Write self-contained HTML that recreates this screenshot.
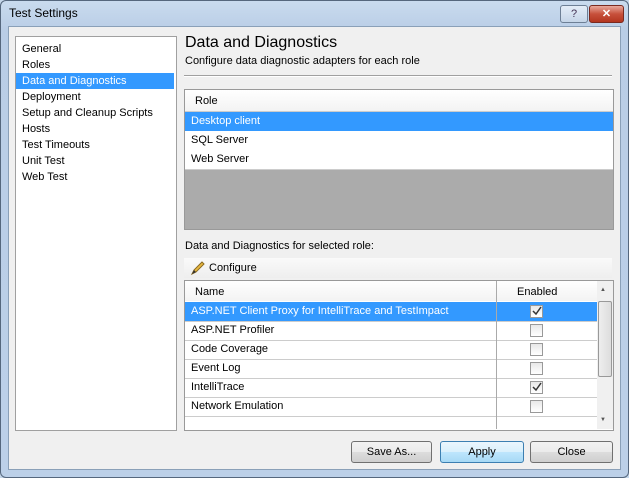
<html><head><style>
body{margin:0;width:629px;height:478px;overflow:hidden;font-family:"Liberation Sans",sans-serif;font-size:11px;color:#000;background:#c5d7ea}
.a{position:absolute}
.win{left:0;top:0;width:627px;height:476px;border:1px solid #55677d;border-radius:6px;background:linear-gradient(#c9dbee,#b9cde6 30px,#bcd0e8);}
.body{left:8px;top:26px;width:611px;height:442px;background:#f0f0f0;border:1px solid #8aa0b8}
.row{position:absolute;left:0;right:0;height:19px;border-bottom:1px solid #ccc;line-height:18px;padding-left:6px}
.sel{background:#3399ff;color:#fff}
.cb{position:absolute;left:345px;top:3px;width:11px;height:11px;border:1px solid #999;background:linear-gradient(#e8e8e8,#fff)}
.btn{position:absolute;top:441px;height:20px;border:1px solid #707070;border-radius:3px;background:linear-gradient(#f2f2f2,#ebebeb 50%,#dddddd 50%,#cfcfcf);text-align:center;line-height:20px}
</style></head><body>
<div class="a win"></div>
<div class="a" style="left:9px;top:6px;font-size:12px">Test Settings</div>
<div class="a" style="left:560px;top:5px;width:26px;height:16px;border:1px solid #6d7f95;border-radius:3px;background:linear-gradient(#e4edf7,#c5d5e8);text-align:center;font-size:11px;color:#435;line-height:16px">?</div>
<div class="a" style="left:589px;top:5px;width:33px;height:16px;border:1px solid #7a2a20;border-radius:3px;background:linear-gradient(#e9a99c,#c7503b 50%,#b33620);text-align:center;color:#fff;font-weight:bold;font-size:11px;line-height:16px">✕</div>
<div class="a body"></div>
<div class="a" style="left:15px;top:36px;width:160px;height:393px;background:#fff;border:1px solid #a0a0a0"></div>
<div class="a" style="left:16px;top:41px;width:158px;line-height:16px">
<div style="padding-left:6px">General</div><div style="padding-left:6px">Roles</div>
<div class="sel" style="padding-left:6px">Data and Diagnostics</div>
<div style="padding-left:6px">Deployment</div><div style="padding-left:6px">Setup and Cleanup Scripts</div>
<div style="padding-left:6px">Hosts</div><div style="padding-left:6px">Test Timeouts</div><div style="padding-left:6px">Unit Test</div><div style="padding-left:6px">Web Test</div></div>
<div class="a" style="left:185px;top:34px;font-size:16px">Data and Diagnostics</div>
<div class="a" style="left:185px;top:55px">Configure data diagnostic adapters for each role</div>
<div class="a" style="left:184px;top:75px;width:428px;height:1px;background:#a0a0a0;border-bottom:1px solid #fff"></div>
<div class="a" style="left:184px;top:89px;width:428px;height:139px;background:#ababab;border:1px solid #999">
<div class="row" style="top:0;height:21px;background:linear-gradient(#fff,#f3f3f3);line-height:22px;padding-left:10px">Role</div>
<div class="row sel" style="top:22px">Desktop client</div>
<div class="row" style="top:41px;background:#fff">SQL Server</div>
<div class="row" style="top:60px;background:#fff">Web Server</div>
</div>
<div class="a" style="left:185px;top:240px">Data and Diagnostics for selected role:</div>
<div class="a" style="left:184px;top:258px;width:428px;height:20px;background:linear-gradient(#fafafa,#eee)"></div>
<svg class="a" style="left:190px;top:260px" width="16" height="16"><path d="M2 14 L4 10 L12 2 L14 4 L6 12 Z" fill="#e8b840" stroke="#8a6a20" stroke-width="1"/><path d="M2 14 L4 10 L6 12Z" fill="#333"/></svg>
<div class="a" style="left:209px;top:262px">Configure</div>
<div class="a" style="left:184px;top:280px;width:428px;height:149px;background:#fff;border:1px solid #999;overflow:hidden">
<div class="a" style="left:0;top:0;width:412px;height:148px">
<div class="row" style="top:0;height:20px;background:linear-gradient(#fff,#f3f3f3);border:none;padding-left:10px;line-height:22px">Name<span style="position:absolute;left:332px">Enabled</span></div>
<div class="row sel" style="top:21px">ASP.NET Client Proxy for IntelliTrace and TestImpact<span class="cb" style="top:3px"><svg width="11" height="11"><path d="M2 5 L5 8 L10 1" stroke="#333" fill="none" stroke-width="1.5"/></svg></span></div>
<div class="row" style="top:40px">ASP.NET Profiler<span class="cb"></span></div>
<div class="row" style="top:59px">Code Coverage<span class="cb"></span></div>
<div class="row" style="top:78px">Event Log<span class="cb"></span></div>
<div class="row" style="top:97px">IntelliTrace<span class="cb"><svg width="11" height="11"><path d="M2 5 L5 8 L10 1" stroke="#333" fill="none" stroke-width="1.5"/></svg></span></div>
<div class="row" style="top:116px">Network Emulation<span class="cb"></span></div>
<div class="a" style="left:311px;top:0;width:1px;height:148px;background:#aaa"></div>
</div>
<div class="a" style="left:412px;top:0;width:16px;height:148px;background:#f0f0f0">
<div class="a" style="left:3px;top:6px;font-size:6px;color:#555">▲</div>
<div class="a" style="left:1px;top:20px;width:12px;height:74px;border:1px solid #999;border-radius:2px;background:linear-gradient(90deg,#eee,#ddd)"></div>
<div class="a" style="left:3px;top:136px;font-size:6px;color:#555">▼</div>
</div>
</div>
<div class="btn" style="left:351px;width:79px">Save As...</div>
<div class="btn" style="left:440px;width:82px;border-color:#3c7fb1;background:linear-gradient(#eaf6fd,#d9f0fc 50%,#bee6fd 50%,#a7d9f5)">Apply</div>
<div class="btn" style="left:530px;width:81px">Close</div>
</body></html>
